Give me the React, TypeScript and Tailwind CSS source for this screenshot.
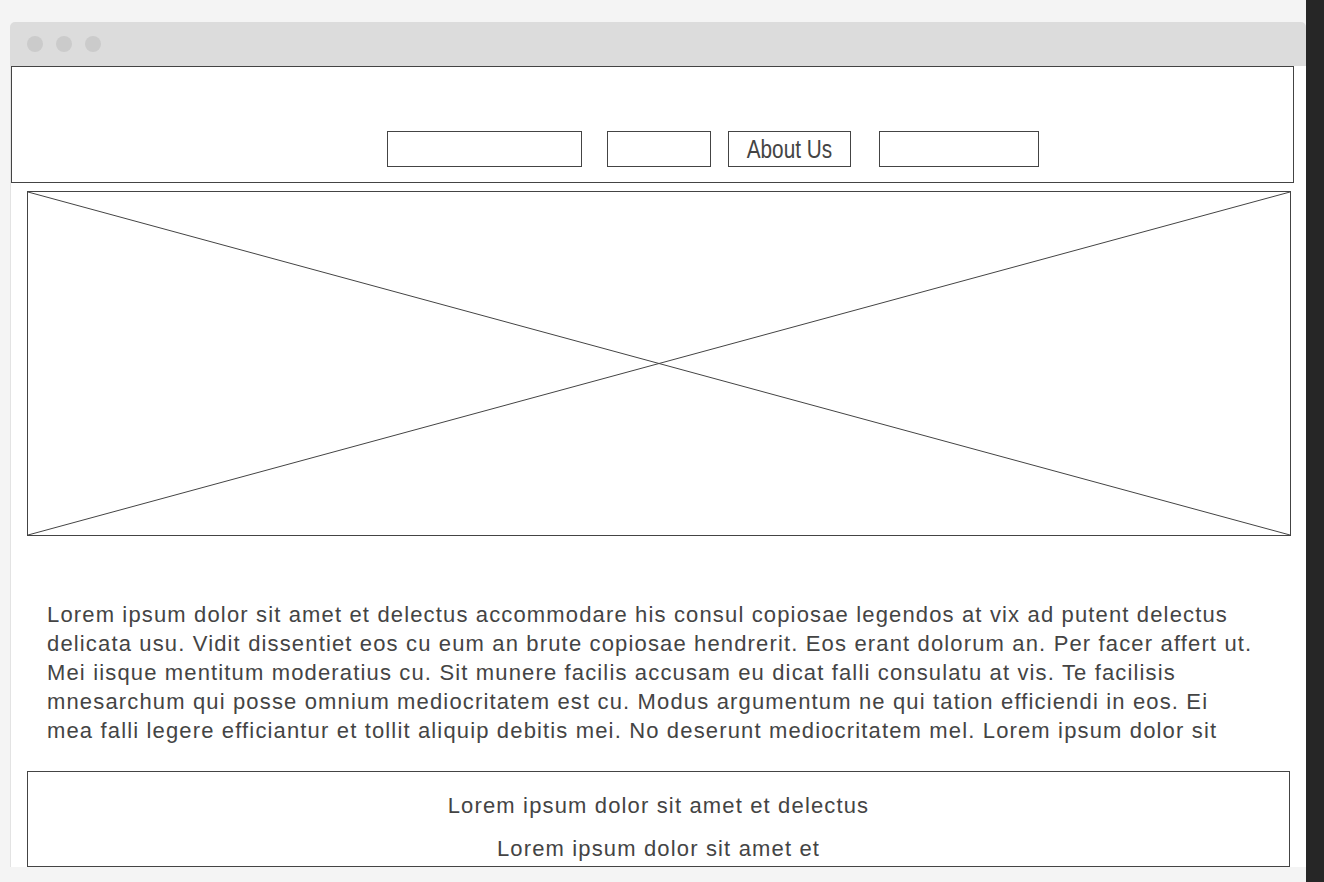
export default function App() {
  return (
    <div className="flex w-[1324px] h-[882px] overflow-hidden bg-[#f4f4f4] font-['Liberation_Sans',Arial,sans-serif] text-[#444]">
      <div className="flex-1 pl-[10px] pt-[22px]">
        {/* Browser window */}
        <div className="w-[1296px]">
          <div className="h-[44px] bg-[#dcdcdc] rounded-t-[5px] flex items-center gap-[13px] pl-[17px]">
            <span className="w-4 h-4 rounded-full bg-[#cbcbcb]" />
            <span className="w-4 h-4 rounded-full bg-[#cbcbcb]" />
            <span className="w-4 h-4 rounded-full bg-[#cbcbcb]" />
          </div>
          <div className="h-[801px] bg-white border-l border-[#e3e3e3] flex flex-col">
            {/* Header */}
            <div className="w-[1283px] h-[117px] border border-[#444] pt-[64px] pl-[375px] flex items-start">
              <div className="w-[195px] h-9 border border-[#444]" />
              <div className="w-[104px] h-9 border border-[#444] ml-[25px]" />
              <div className="w-[123px] h-9 border border-[#444] ml-[17px] flex items-center justify-center">
                <span className="inline-block text-[25px] leading-none scale-x-[0.83] whitespace-nowrap">About Us</span>
              </div>
              <div className="w-[160px] h-9 border border-[#444] ml-[28px]" />
            </div>

            {/* Image placeholder */}
            <div className="ml-[16px] mt-[8px] w-[1264px] h-[345px] border border-[#444]">
              <svg className="w-full h-full block" viewBox="0 0 100 100" preserveAspectRatio="none">
                <line x1="0" y1="0" x2="100" y2="100" stroke="#444" strokeWidth="1" vectorEffect="non-scaling-stroke" />
                <line x1="100" y1="0" x2="0" y2="100" stroke="#444" strokeWidth="1" vectorEffect="non-scaling-stroke" />
              </svg>
            </div>

            {/* Body text */}
            <p className="ml-[36px] mt-[64px] w-[1208px] text-[22px] leading-[29px] tracking-[1.15px]">
              Lorem ipsum dolor sit amet et delectus accommodare his consul copiosae legendos at vix ad putent delectus
              delicata usu. Vidit dissentiet eos cu eum an brute copiosae hendrerit. Eos erant dolorum an. Per facer affert ut.
              Mei iisque mentitum moderatius cu. Sit munere facilis accusam eu dicat falli consulatu at vis. Te facilisis
              mnesarchum qui posse omnium mediocritatem est cu. Modus argumentum ne qui tation efficiendi in eos. Ei mea falli
              legere efficiantur et tollit aliquip debitis mei. No deserunt mediocritatem mel. Lorem ipsum dolor sit
            </p>

            {/* Footer */}
            <div className="ml-[16px] mt-[26px] w-[1263px] h-[96px] border border-[#444] flex flex-col items-center pt-[19px] gap-[14px] text-[22px] leading-[29px] tracking-[1.15px]">
              <div>Lorem ipsum dolor sit amet et delectus</div>
              <div>Lorem ipsum dolor sit amet et</div>
            </div>
          </div>
        </div>
      </div>
      <div className="w-[18px] h-full bg-[#262626]" />
    </div>
  );
}
